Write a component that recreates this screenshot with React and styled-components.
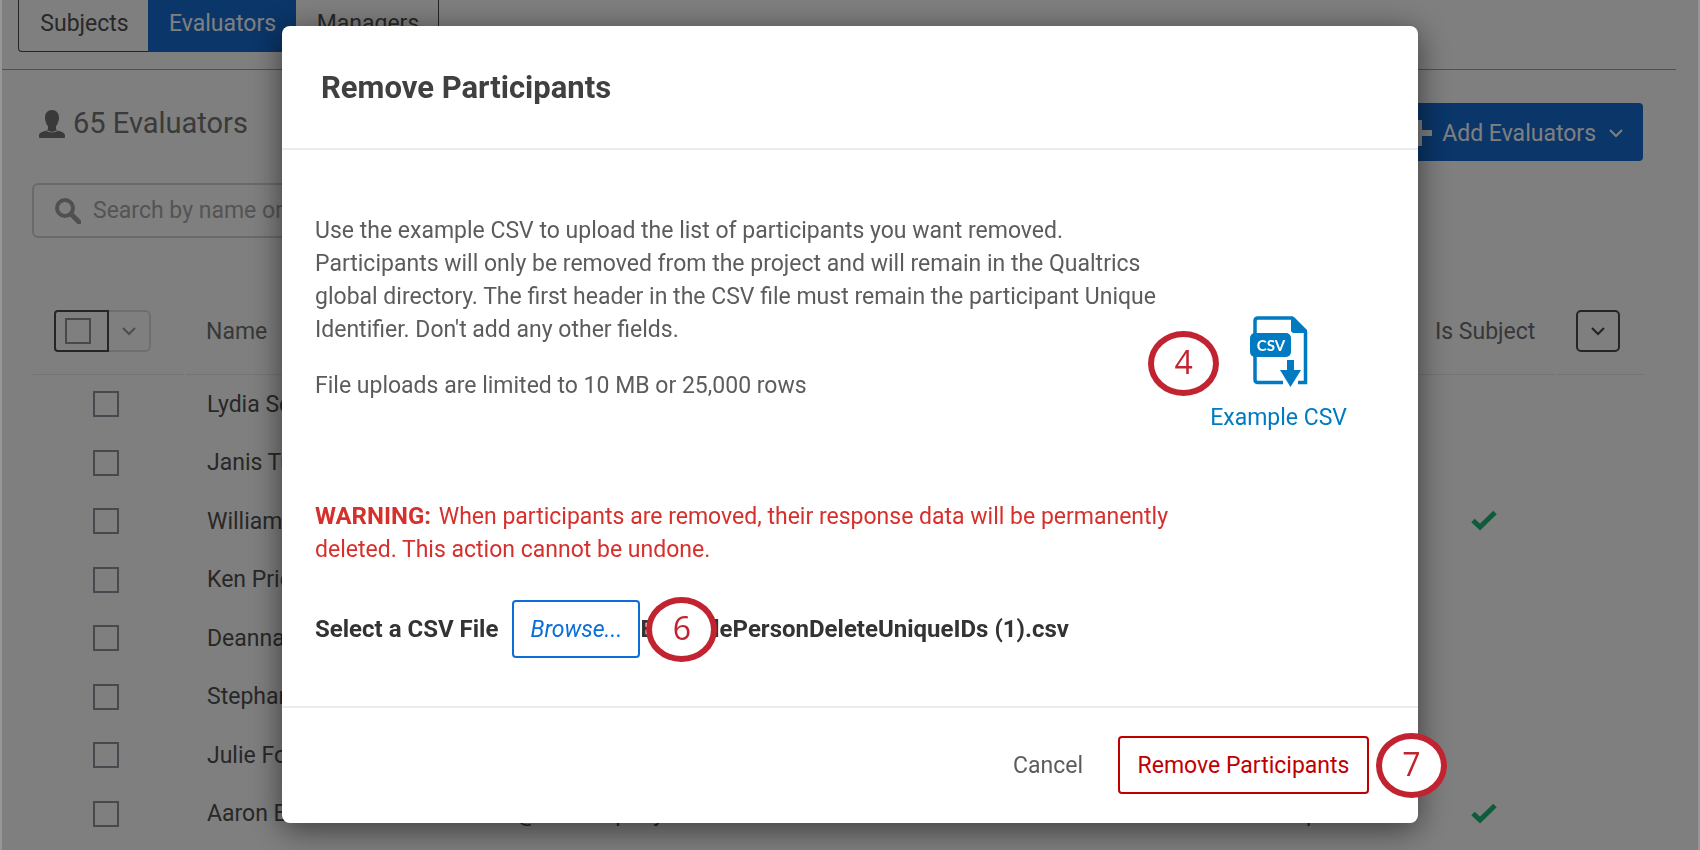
import React from "react";
import styled, { createGlobalStyle, css } from "styled-components";

const GlobalStyle = createGlobalStyle`
  *, *::before, *::after { box-sizing: border-box; }
  body {
    margin: 0;
    overflow: hidden;
    background: #979797;
    color: #5c5c5c;
    font-family: Roboto, "Liberation Sans", sans-serif;
    font-size: 23px;
    line-height: 33px;
  }
  button, input { font: inherit; color: inherit; margin: 0; }
  h1, h2, p { margin: 0; }
`;

const Frame = styled.div`
  position: relative;
  height: 100vh;
  overflow: hidden;
  margin: 0 2px;
  background: #fff;
`;

const Tabs = styled.nav`
  display: flex;
  padding: 0 0 17px 16px;
  margin-right: 22px;
  border-bottom: 1px solid #a0a0a0;
`;

const Tab = styled.button`
  width: ${(p) => p.$width}px;
  height: 52px;
  padding: 0 0 4px 2px;
  border: 1px solid #4a4a4a;
  border-top: 0;
  border-left-width: ${(p) => (p.$first ? 1 : 0)}px;
  border-right-width: ${(p) => (p.$first ? 0 : 1)}px;
  border-bottom-left-radius: ${(p) => (p.$first ? 4 : 0)}px;
  background: #fff;
  color: #505050;
  ${(p) =>
    p.$active &&
    css`
      background: #146cd2;
      border-color: #146cd2;
      color: #fff;
    `}
`;

const Toolbar = styled.header`
  display: flex;
  justify-content: space-between;
  padding: 33px 55px 0 37px;
`;

const Count = styled.h1`
  display: flex;
  align-items: center;
  gap: 8px;
  height: 41px;
  color: #747474;
  font-size: 29px;
  font-weight: 400;
`;

const AddButton = styled.button`
  display: flex;
  align-items: center;
  justify-content: flex-end;
  height: 58px;
  padding: 2px 20px 0;
  border: 0;
  border-radius: 4px;
  background: #146cd2;
  color: #fff;
  white-space: nowrap;
  & span { margin: 0 13px 0 10px; }
`;

const SearchBox = styled.label`
  display: flex;
  align-items: center;
  gap: 12px;
  width: 480px;
  height: 55px;
  margin: 22px 0 72px 30px;
  padding: 0 21px;
  border: 2px solid #d4d4d4;
  border-radius: 6px;
  color: #a0a0a0;
`;

const SearchInput = styled.input`
  flex: 1;
  min-width: 0;
  padding: 0;
  border: 0;
  background: none;
  &::placeholder { color: #a8a8a8; opacity: 1; }
`;

const Table = styled.table`
  width: calc(100% - 81px);
  margin-left: 29px;
  table-layout: fixed;
  border-collapse: separate;
  border-spacing: 2px 0;
`;

const HeadCell = styled.th`
  width: ${(p) => (p.$width ? `${p.$width}px` : "auto")};
  height: 63px;
  padding: 0 0 22px ${(p) => p.$indent || 0}px;
  border-bottom: 1px solid #e9e9e9;
  color: #707070;
  font-weight: 400;
  text-align: left;
  white-space: nowrap;
`;

const Row = styled.tr`
  height: 58px;
  &:nth-child(even) { height: 59px; }
`;

const Cell = styled.td`
  padding: 0 0 0 ${(p) => p.$indent || 0}px;
  color: #505050;
  white-space: nowrap;
  vertical-align: middle;
  & > * { display: block; }
`;

const CheckBox = styled.input.attrs({ type: "checkbox" })`
  appearance: none;
  width: 26px;
  height: 26px;
  border: 2px solid #8c949c;
  background: #fff;
`;

const SelectGroup = styled.div`
  display: flex;
  width: 97px;
  height: 42px;
`;

const SelectAll = styled.label`
  display: flex;
  align-items: center;
  width: 55px;
  padding-left: 9px;
  border: 2px solid #4a4a4a;
  border-radius: 4px 0 0 4px;
`;

const MenuButton = styled.button`
  display: flex;
  align-items: center;
  justify-content: center;
  width: 42px;
  padding: 0;
  border: 2px solid #dcdcdc;
  border-left: 0;
  border-radius: 0 6px 6px 0;
  background: #fff;
  color: #999;
`;

const ColumnsButton = styled(MenuButton)`
  width: 44px;
  height: 42px;
  border: 2px solid #4a4a4a;
  border-radius: 5px;
  color: #444;
`;

const Overlay = styled.div`
  position: fixed;
  inset: 0 2px;
  display: flex;
  justify-content: center;
  align-items: flex-start;
  padding: 26px 32px;
  background: rgba(0, 0, 0, 0.5);
`;

const Dialog = styled.section`
  width: 100%;
  max-width: 1136px;
  border-radius: 8px;
  background: #fff;
  box-shadow: 0 6px 32px rgba(0, 0, 0, 0.55);
`;

const DialogHeader = styled.header`
  padding: 42px 39px 40px;
  border-bottom: 2px solid #ececec;
`;

const Title = styled.h2`
  color: #404040;
  font-size: 31px;
  line-height: 40px;
  font-weight: 700;
`;

const DialogBody = styled.div`
  padding: 64px 71px 48px 33px;
`;

const Intro = styled.div`
  display: flex;
  justify-content: space-between;
  white-space: nowrap;
`;

const Copy = styled.div`
  display: flex;
  flex-direction: column;
  gap: 23px;
`;

const ExampleLink = styled.a`
  position: relative;
  display: flex;
  flex-direction: column;
  align-items: center;
  gap: 14px;
  margin-top: 102px;
  color: #007ac0;
  text-decoration: none;
`;

const Warning = styled.p`
  margin-top: 66px;
  color: #d6302c;
  & strong {
    margin-right: 2px;
    font-size: 24px;
  }
`;

const FileRow = styled.div`
  display: flex;
  align-items: center;
  margin-top: 34px;
  color: #333;
  font-size: 24px;
  font-weight: 700;
`;

const OutlineButton = styled.button`
  height: 58px;
  padding: 0;
  border: 2px solid currentColor;
  border-radius: 4px;
  background: #fff;
  color: ${(p) => p.$color};
  font-size: 23px;
  font-weight: 400;
  white-space: nowrap;
`;

const BrowseButton = styled(OutlineButton)`
  margin-left: 14px;
  width: 128px;
  font-style: italic;
`;

const Anchor = styled.div`
  position: relative;
`;

const DialogFooter = styled.footer`
  display: flex;
  justify-content: flex-end;
  align-items: center;
  gap: 35px;
  padding: 28px 49px 29px;
  border-top: 2px solid #ececec;
`;

const CancelButton = styled.button`
  padding: 0;
  border: 0;
  background: none;
`;

const RemoveButton = styled(OutlineButton)`
  width: 251px;
`;

const Callout = styled.span`
  position: absolute;
  left: ${(p) => p.$left};
  top: ${(p) => p.$top}px;
  display: flex;
  align-items: center;
  justify-content: center;
  width: 71px;
  height: 65px;
  padding-bottom: 4px;
  border: 6px solid #c12430;
  border-radius: 50%;
  background: #fff;
  color: #c12430;
  font-family: "Open Sans", "Noto Sans", sans-serif;
  font-size: 32px;
  font-weight: 500;
`;

const Chevron = () => (
  <svg width="14" height="9" viewBox="0 0 14 9" fill="none" stroke="currentColor" strokeWidth="2" aria-hidden="true">
    <path d="M1 1l6 6 6-6" />
  </svg>
);

const PersonIcon = () => (
  <svg width="26" height="28" viewBox="0 0 26 28" fill="currentColor" aria-hidden="true">
    <path d="M13 0c4.200 0 7 3 7 7.500 0 3.500-1.200 6.500-3 8.700v2.300c0 .9.500 1.500 1.400 1.700L13 22l-5.400-1.800c.9-.2 1.400-.8 1.400-1.700v-2.300C7.200 14 6 11 6 7.500 6 3 8.800 0 13 0z" />
    <path d="M7 20.800c3.500 2.300 8.500 2.300 12 0 2.500.7 7 1.700 7 4.700V27q0 1-1 1H1q-1 0-1-1v-1.500c0-3 4.500-4 7-4.700z" />
  </svg>
);

const SearchIcon = () => (
  <svg width="26" height="26" viewBox="0 0 26 26" fill="none" stroke="currentColor" aria-hidden="true">
    <circle cx="10" cy="10" r="8" strokeWidth="4" />
    <path d="M16 16l8 8" strokeWidth="5" strokeLinecap="round" />
  </svg>
);

const PlusIcon = () => (
  <svg width="26" height="26" viewBox="0 0 26 26" fill="currentColor" aria-hidden="true">
    <path d="M10 0h6v10h10v6H16v10h-6V16H0v-6h10z" />
  </svg>
);

const CheckIcon = () => (
  <svg width="26" height="22" viewBox="0 0 26 22" fill="none" stroke="#1cb877" strokeWidth="5" role="img" aria-label="Yes">
    <path d="M2 10.500l7 6.500L24 2.500" />
  </svg>
);

const CsvIcon = () => (
  <svg width="58" height="71" viewBox="0 0 58 71" fill="none" aria-hidden="true">
    <path
      d="M33 66.500H8q-3 0-3-3V5q0-3 3-3h34l13.500 14v50.500H48"
      stroke="#007ac0"
      strokeWidth="3.500"
    />
    <path d="M41 1h3l13 13v3H44q-3 0-3-3z" fill="#007ac0" />
    <rect x="0" y="17" width="41" height="24" rx="5" fill="#007ac0" />
    <path d="M37 44h7v10h7L40.500 71 30 54h7z" fill="#007ac0" />
    <text x="21" y="35" textAnchor="middle" fontFamily="Lato, sans-serif" fontSize="15" fontWeight="700" fill="#fff">
      CSV
    </text>
  </svg>
);

const people = [
  { name: "Lydia Scott" },
  { name: "Janis Tuck" },
  { name: "William", isSubject: true },
  { name: "Ken Price" },
  { name: "Deanna" },
  { name: "Stephan" },
  { name: "Julie Foy" },
  { name: "Aaron Eli", email: "abell@thecompany.com", type: "Participant", isSubject: true },
];

export default function App() {
  return (
    <>
      <GlobalStyle />
      <Frame>
        <Tabs>
          <Tab $width={130} $first>Subjects</Tab>
          <Tab $width={148} $active>Evaluators</Tab>
          <Tab $width={143}>Managers</Tab>
        </Tabs>
        <Toolbar>
          <Count><PersonIcon />65 Evaluators</Count>
          <AddButton><PlusIcon /><span>Add Evaluators</span><Chevron /></AddButton>
        </Toolbar>
        <SearchBox>
          <SearchIcon />
          <SearchInput type="search" placeholder="Search by name or email" aria-label="Search evaluators" />
        </SearchBox>
        <Table>
          <thead>
            <tr>
              <HeadCell $width={151} $indent={21}>
                <SelectGroup>
                  <SelectAll><CheckBox aria-label="Select all" /></SelectAll>
                  <MenuButton aria-label="Selection options"><Chevron /></MenuButton>
                </SelectGroup>
              </HeadCell>
              <HeadCell $width={270} $indent={20}>Name</HeadCell>
              <HeadCell />
              <HeadCell $width={180} />
              <HeadCell $width={160} $indent={41}>Is Subject</HeadCell>
              <HeadCell $width={88} $indent={20}>
                <ColumnsButton aria-label="Choose columns"><Chevron /></ColumnsButton>
              </HeadCell>
            </tr>
          </thead>
          <tbody>
            {people.map((p) => (
              <Row key={p.name}>
                <Cell $indent={60}><CheckBox aria-label={`Select ${p.name}`} /></Cell>
                <Cell $indent={21}>{p.name}</Cell>
                <Cell $indent={10}>{p.email}</Cell>
                <Cell $indent={28}>{p.type}</Cell>
                <Cell $indent={77}>{p.isSubject && <CheckIcon />}</Cell>
                <Cell />
              </Row>
            ))}
          </tbody>
        </Table>
      </Frame>
      <Overlay>
        <Dialog role="dialog" aria-modal="true" aria-labelledby="dialog-title">
          <DialogHeader>
            <Title id="dialog-title">Remove Participants</Title>
          </DialogHeader>
          <DialogBody>
            <Intro>
              <Copy>
                <p>
                  Use the example CSV to upload the list of participants you want removed.<br />
                  Participants will only be removed from the project and will remain in the Qualtrics<br />
                  global directory. The first header in the CSV file must remain the participant Unique<br />
                  Identifier. Don't add any other fields.
                </p>
                <p>File uploads are limited to 10 MB or 25,000 rows</p>
              </Copy>
              <ExampleLink href="#example">
                <CsvIcon />
                Example CSV
                <Callout $left="-62px" $top={15}>4</Callout>
              </ExampleLink>
            </Intro>
            <Warning>
              <strong>WARNING:</strong> When participants are removed, their response data will be permanently<br />
              deleted. This action cannot be undone.
            </Warning>
            <FileRow>
              <span id="file-label">Select a CSV File</span>
              <BrowseButton $color="#0b6ed8" aria-describedby="file-label">Browse...</BrowseButton>
              <Anchor>
                ExamplePersonDeleteUniqueIDs (1).csv
                <Callout $left="6px" $top={-16}>6</Callout>
              </Anchor>
            </FileRow>
          </DialogBody>
          <DialogFooter>
            <CancelButton>Cancel</CancelButton>
            <Anchor>
              <RemoveButton $color="#c00000">Remove Participants</RemoveButton>
              <Callout $left="calc(100% + 7px)" $top={-3}>7</Callout>
            </Anchor>
          </DialogFooter>
        </Dialog>
      </Overlay>
    </>
  );
}
